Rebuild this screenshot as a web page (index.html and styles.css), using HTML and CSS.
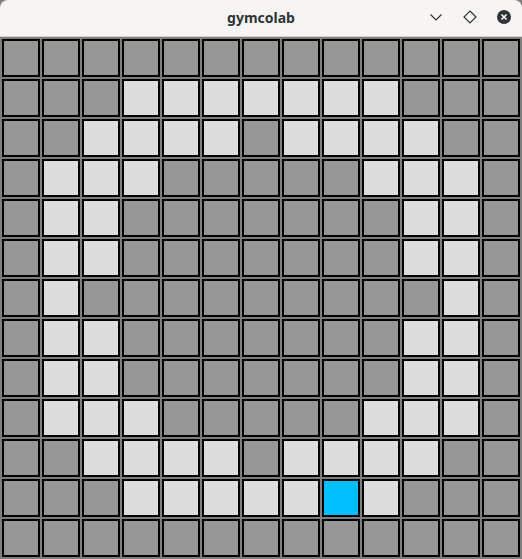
FILE: index.html
```html
<!DOCTYPE html>
<html>
<head>
<meta charset="utf-8">
<link rel="stylesheet" href="styles.css">
</head>
<body>
<div class="window">
  <div class="titlebar">
    <span class="title">gymcolab</span>
    <div class="controls">
      <svg class="ctl" width="16" height="16" viewBox="0 0 16 16"><path d="M2.5 5.5 L8 11 L13.5 5.5" fill="none" stroke="#2e3436" stroke-width="1.2"/></svg>
      <svg class="ctl" width="16" height="16" viewBox="0 0 16 16"><path d="M8 2 L14 8 L8 14 L2 8 Z" fill="none" stroke="#2e3436" stroke-width="1.2"/></svg>
      <svg class="ctl" width="16" height="16" viewBox="0 0 16 16"><circle cx="8" cy="8" r="7" fill="#2e3436"/><path d="M5.5 5.5 L10.5 10.5 M10.5 5.5 L5.5 10.5" stroke="#fff" stroke-width="1.6"/></svg>
    </div>
  </div>
  <div class="grid">
    <div class="c d"></div><div class="c d"></div><div class="c d"></div><div class="c d"></div><div class="c d"></div><div class="c d"></div><div class="c d"></div><div class="c d"></div><div class="c d"></div><div class="c d"></div><div class="c d"></div><div class="c d"></div><div class="c d"></div>
    <div class="c d"></div><div class="c d"></div><div class="c d"></div><div class="c l"></div><div class="c l"></div><div class="c l"></div><div class="c l"></div><div class="c l"></div><div class="c l"></div><div class="c l"></div><div class="c d"></div><div class="c d"></div><div class="c d"></div>
    <div class="c d"></div><div class="c d"></div><div class="c l"></div><div class="c l"></div><div class="c l"></div><div class="c l"></div><div class="c d"></div><div class="c l"></div><div class="c l"></div><div class="c l"></div><div class="c l"></div><div class="c d"></div><div class="c d"></div>
    <div class="c d"></div><div class="c l"></div><div class="c l"></div><div class="c l"></div><div class="c d"></div><div class="c d"></div><div class="c d"></div><div class="c d"></div><div class="c d"></div><div class="c l"></div><div class="c l"></div><div class="c l"></div><div class="c d"></div>
    <div class="c d"></div><div class="c l"></div><div class="c l"></div><div class="c d"></div><div class="c d"></div><div class="c d"></div><div class="c d"></div><div class="c d"></div><div class="c d"></div><div class="c d"></div><div class="c l"></div><div class="c l"></div><div class="c d"></div>
    <div class="c d"></div><div class="c l"></div><div class="c l"></div><div class="c d"></div><div class="c d"></div><div class="c d"></div><div class="c d"></div><div class="c d"></div><div class="c d"></div><div class="c d"></div><div class="c l"></div><div class="c l"></div><div class="c d"></div>
    <div class="c d"></div><div class="c l"></div><div class="c d"></div><div class="c d"></div><div class="c d"></div><div class="c d"></div><div class="c d"></div><div class="c d"></div><div class="c d"></div><div class="c d"></div><div class="c d"></div><div class="c l"></div><div class="c d"></div>
    <div class="c d"></div><div class="c l"></div><div class="c l"></div><div class="c d"></div><div class="c d"></div><div class="c d"></div><div class="c d"></div><div class="c d"></div><div class="c d"></div><div class="c d"></div><div class="c l"></div><div class="c l"></div><div class="c d"></div>
    <div class="c d"></div><div class="c l"></div><div class="c l"></div><div class="c d"></div><div class="c d"></div><div class="c d"></div><div class="c d"></div><div class="c d"></div><div class="c d"></div><div class="c d"></div><div class="c l"></div><div class="c l"></div><div class="c d"></div>
    <div class="c d"></div><div class="c l"></div><div class="c l"></div><div class="c l"></div><div class="c d"></div><div class="c d"></div><div class="c d"></div><div class="c d"></div><div class="c d"></div><div class="c l"></div><div class="c l"></div><div class="c l"></div><div class="c d"></div>
    <div class="c d"></div><div class="c d"></div><div class="c l"></div><div class="c l"></div><div class="c l"></div><div class="c l"></div><div class="c d"></div><div class="c l"></div><div class="c l"></div><div class="c l"></div><div class="c l"></div><div class="c d"></div><div class="c d"></div>
    <div class="c d"></div><div class="c d"></div><div class="c d"></div><div class="c l"></div><div class="c l"></div><div class="c l"></div><div class="c l"></div><div class="c l"></div><div class="c b"></div><div class="c l"></div><div class="c d"></div><div class="c d"></div><div class="c d"></div>
    <div class="c d"></div><div class="c d"></div><div class="c d"></div><div class="c d"></div><div class="c d"></div><div class="c d"></div><div class="c d"></div><div class="c d"></div><div class="c d"></div><div class="c d"></div><div class="c d"></div><div class="c d"></div><div class="c d"></div>
  </div>
</div>
</body>
</html>
```

FILE: styles.css
```css
html, body {
  margin: 0;
  padding: 0;
  background: #7f7f7f;
}
.window {
  width: 522px;
  height: 559px;
  display: flex;
  flex-direction: column;
  background: #7f7f7f;
}
.titlebar {
  height: 36px;
  border-bottom: 1px solid #d6d2ce;
  background: #f6f5f4;
  border-radius: 8px 8px 0 0;
  display: flex;
  align-items: center;
  justify-content: center;
  position: relative;
  flex: none;
}
.title {
  font-family: "Noto Sans", "Open Sans", sans-serif;
  font-weight: 700;
  font-size: 14px;
  color: #2e3436;
  margin-top: -1px;
}
.controls {
  position: absolute;
  right: 10px;
  top: 9px;
  display: flex;
  gap: 18px;
  align-items: center;
}
.ctl {
  display: block;
}
.grid {
  display: grid;
  grid-template-columns: repeat(13, 40px);
  grid-auto-rows: 40px;
  padding: 1px;
  background: #7f7f7f;
}
.c {
  margin: 1px;
  border: 2px solid #000;
  box-sizing: border-box;
}
.d { background: #969696; }
.l { background: #dcdcdc; }
.b { background: #00bfff; }
```
